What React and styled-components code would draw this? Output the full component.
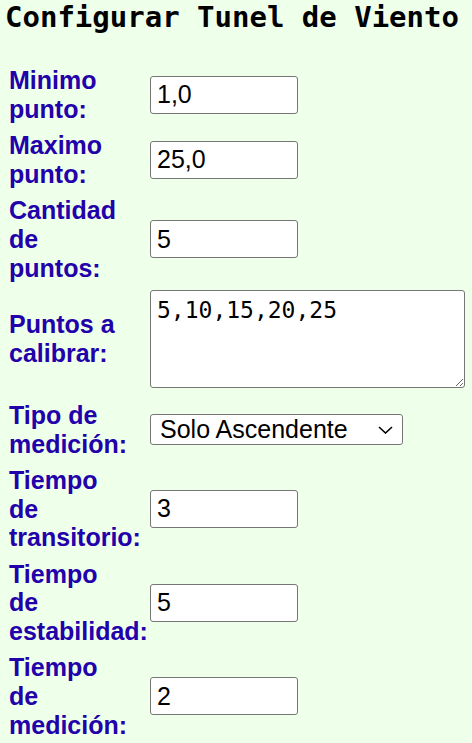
import React from "react";
import styled, { createGlobalStyle } from "styled-components";

const GlobalStyle = createGlobalStyle`
  html, body {
    margin: 0;
    padding: 0;
    background: #eeffea;
  }
  body {
    font-family: "Liberation Sans", Arial, sans-serif;
  }
`;

const Page = styled.div``;

const Title = styled.h1`
  margin: 0;
  padding-left: 5px;
  font-family: "DejaVu Sans Mono", monospace;
  font-weight: bold;
  font-size: 29px;
  line-height: 34px;
  color: #000;
  white-space: nowrap;
`;

const Form = styled.form`
  display: flex;
  flex-direction: column;
  gap: 7.5px;
  margin-top: 32px;
  padding-left: 9px;
`;

const Row = styled.div`
  display: flex;
  align-items: center;
  margin-bottom: ${(p) => p.$extra || 0}px;
`;

const Label = styled.label`
  flex: 0 0 141px;
  font-family: "Liberation Sans", Arial, sans-serif;
  font-weight: bold;
  font-size: 25px;
  line-height: 28.75px;
  color: #2200aa;
  white-space: nowrap;
`;

const Line = styled.span`
  display: block;
`;

const TextInput = styled.input`
  box-sizing: border-box;
  width: 148px;
  height: 38px;
  margin: 0;
  padding: 0 6px;
  border: 1px solid #767676;
  border-radius: 3px;
  background: #fff;
  font-family: "Liberation Sans", Arial, sans-serif;
  font-size: 25px;
  color: #000;
  outline: none;
`;

const TextArea = styled.textarea`
  box-sizing: border-box;
  width: 315px;
  height: 98px;
  margin: 0;
  padding: 6px 6px;
  border: 1px solid #767676;
  border-radius: 3px;
  background: #fff;
  font-family: "DejaVu Sans Mono", monospace;
  font-size: 23px;
  color: #000;
  outline: none;
  display: block;
`;

const SelectWrap = styled.div`
  position: relative;
  width: 253px;
  height: 31px;
`;

const Select = styled.select`
  appearance: none;
  -webkit-appearance: none;
  box-sizing: border-box;
  width: 100%;
  height: 100%;
  margin: 0;
  padding: 0 30px 0 9px;
  border: 1px solid #767676;
  border-radius: 3px;
  background: #fff;
  font-family: "Liberation Sans", Arial, sans-serif;
  font-size: 25px;
  line-height: 29px;
  color: #000;
  outline: none;
`;

const Chevron = styled.svg`
  position: absolute;
  right: 10px;
  top: 12px;
  width: 15px;
  height: 8px;
  pointer-events: none;
`;

const Field = ({ lines, children, extra }) => (
  <Row $extra={extra}>
    <Label>
      {lines.map((l, i) => (
        <Line key={i}>{l}</Line>
      ))}
    </Label>
    {children}
  </Row>
);

export default function App() {
  return (
    <Page>
      <GlobalStyle />
      <Title>Configurar Tunel de Viento</Title>
      <Form onSubmit={(e) => e.preventDefault()}>
        <Field lines={["Minimo", "punto:"]}>
          <TextInput defaultValue="1,0" />
        </Field>
        <Field lines={["Maximo", "punto:"]}>
          <TextInput defaultValue="25,0" />
        </Field>
        <Field lines={["Cantidad", "de", "puntos:"]}>
          <TextInput defaultValue="5" />
        </Field>
        <Field lines={["Puntos a", "calibrar:"]} extra={5.5}>
          <TextArea defaultValue="5,10,15,20,25" />
        </Field>
        <Field lines={["Tipo de", "medición:"]}>
          <SelectWrap>
            <Select defaultValue="asc">
              <option value="asc">Solo Ascendente</option>
              <option value="desc">Solo Descendente</option>
              <option value="both">Ascendente y Descendente</option>
            </Select>
            <Chevron viewBox="0 0 15 8">
              <path d="M1 1 L7.5 7 L14 1" fill="none" stroke="#000" strokeWidth="1.6" />
            </Chevron>
          </SelectWrap>
        </Field>
        <Field lines={["Tiempo", "de", "transitorio:"]}>
          <TextInput defaultValue="3" />
        </Field>
        <Field lines={["Tiempo", "de", "estabilidad:"]}>
          <TextInput defaultValue="5" />
        </Field>
        <Field lines={["Tiempo", "de", "medición:"]}>
          <TextInput defaultValue="2" />
        </Field>
      </Form>
    </Page>
  );
}
